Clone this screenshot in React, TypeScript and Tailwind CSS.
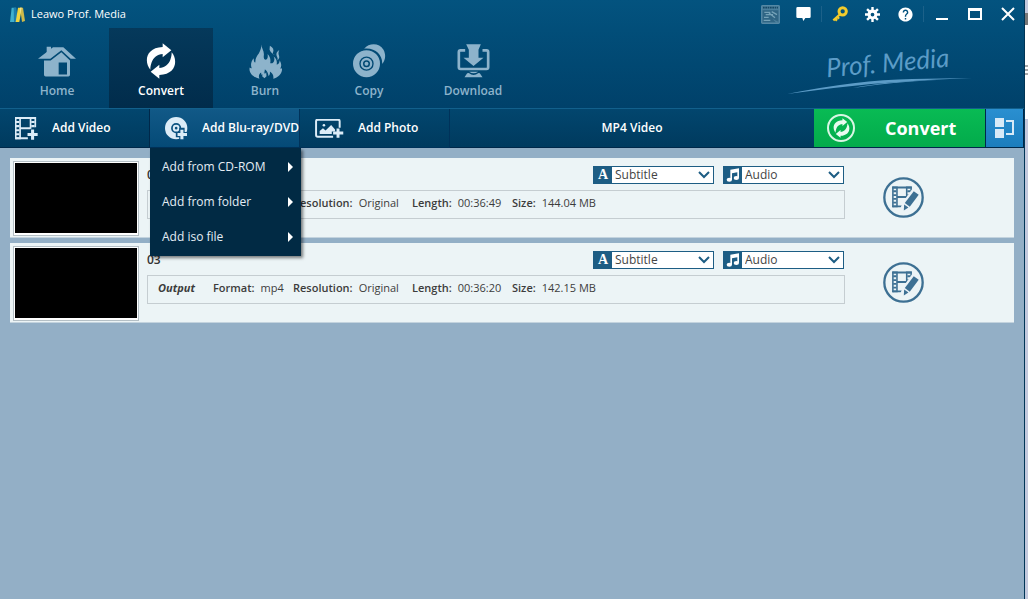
import type { ReactNode } from 'react';
import { MdHelp } from 'react-icons/md';

interface MediaFile {
  name: string;
  format: string;
  resolution: string;
  length: string;
  size: string;
}

const files: MediaFile[] = [
  { name: '02', format: 'mp4', resolution: 'Original', length: '00:36:49', size: '144.04 MB' },
  { name: '03', format: 'mp4', resolution: 'Original', length: '00:36:20', size: '142.15 MB' },
];

const menuItems = ['Add from CD-ROM', 'Add from folder', 'Add iso file'];

function LogoIcon() {
  return (
    <svg viewBox="0 0 45 45" className="w-[15px] h-[15px]" aria-hidden="true">
      <path d="M5 2h13L12 45H0z" fill="#3fb0cf" />
      <path d="M11 2h8l5 43H12z" fill="#1c7fae" />
      <path d="M24 2h12l-8 43H17z" fill="#efd440" />
      <path d="M30 2h9l6 40-9 3z" fill="#cdb94a" />
      <path d="M30 2h5l-4 20z" fill="#f7e997" />
    </svg>
  );
}

function HomeIcon() {
  return (
    <svg viewBox="0 0 114 92" className="w-[38px] h-[31px]" fill="currentColor" aria-hidden="true">
      <path d="M26 2h13v10L26 21z" />
      <path d="M0 38 45 3h31l38 35H98L70 12 37 38z" />
      <path
        fillRule="evenodd"
        d="M18 43h20l32-25 26 25v43q0 5-5 5H23q-5 0-5-5zM62 49v36h25V49z"
      />
    </svg>
  );
}

function ConvertArrows({ className }: { className: string }) {
  return (
    <svg viewBox="0 0 90 108" className={className} fill="currentColor" aria-hidden="true">
      <path d="M50 1 76 22 50 43V33C34 34 22 44 17 58 14 66 13 72 13 80-6 58-2 14 50 12z" />
      <path
        transform="rotate(180 45 54)"
        d="M50 1 76 22 50 43V33C34 34 22 44 17 58 14 66 13 72 13 80-6 58-2 14 50 12z"
      />
    </svg>
  );
}

function BurnIcon() {
  return (
    <svg viewBox="0 0 98 104" className="w-[33px] h-[35px]" fill="currentColor" aria-hidden="true">
      <path d="M37 0c-1 12 9 20 7 34-1 9 1 12 6 13 5-2 7-8 5-17 8 8 10 16 8 27 6 2 11-2 12-9 1-4 0-8-2-11 9 6 11 15 9 24 6-1 9-5 9-13 7 12 5 20 2 25 3 1 4 0 5-2 2 14-9 29-26 32 2-8-2-16-10-21 1 7-1 11-4 13-1-9-5-15-11-20 1 9-6 12-8 18-2-1-3-4-3-8-7 5-8 11-5 18C14 100-2 86 2 70c2 2 4 3 6 2-4-10-2-21 6-30 0 8 1 12 5 13-1-12 4-19 10-27 5-8 8-17 8-28z" />
      <path d="M62 5c10 5 13 12 9 21 0 4 2 6 5 6-7-5-14-9-15-16 0-4 1-7 1-11z" />
      <path d="M90 18c-7 5-10 10-8 17 2 6 5 8 2 13 6-4 7-8 5-14-2-5-2-9 1-16z" />
      <path d="M41 88l4-6 2 7 4-5 1 12-6 6-7-6z" />
    </svg>
  );
}

function CopyIcon() {
  return (
    <svg viewBox="0 0 98 102" className="w-[33px] h-[34px]" fill="none" aria-hidden="true">
      <path
        fill="currentColor"
        d="M33 14C48-4 78-4 91 17c8 15 6 32-4 43C89 34 67 10 33 14z"
      />
      <circle cx="40" cy="59" r="31" stroke="currentColor" strokeWidth="19" />
      <circle cx="40" cy="59" r="14" stroke="currentColor" strokeWidth="7" />
      <circle cx="40" cy="59" r="6" fill="currentColor" />
    </svg>
  );
}

function DownloadIcon() {
  return (
    <svg viewBox="0 0 98 102" className="w-[33px] h-[34px]" fill="none" aria-hidden="true">
      <path
        d="M24 19H10q-5 0-5 5v46q0 5 5 5h78q5 0 5-5V24q0-5-5-5H76"
        stroke="currentColor"
        strokeWidth="8"
      />
      <path fill="currentColor" d="M27 1h44l-7 16v24h15L49 66 19 41h16V17z" />
      <path fill="currentColor" d="M36 83q13 9 27 0zM30 88l5-1q14 12 29 0l4 1 8 12H22z" />
    </svg>
  );
}

// film frame shared by the "add" button and the edit button
function FilmFrame() {
  return (
    <>
      <path d="M2 0v66M15 0v66M46 0v35M60 0v30" strokeWidth="5" />
      <path d="M8 0v66M53 0v31" strokeWidth="10" strokeDasharray="6 6" />
      <path d="M0 3h62M15 33h31M0 63h38" strokeWidth="6" />
    </>
  );
}

function AddVideoIcon() {
  return (
    <svg viewBox="0 0 68 68" className="w-[23px] h-[23px]" fill="none" stroke="currentColor" aria-hidden="true">
      <FilmFrame />
      <path d="M52 37v30M37 52h30" strokeWidth="9" />
    </svg>
  );
}

function AddDiscIcon() {
  return (
    <svg viewBox="0 0 68 68" className="w-[23px] h-[23px]" fill="none" stroke="currentColor" aria-hidden="true">
      <circle cx="33" cy="33" r="24" strokeWidth="18" />
      <circle cx="33" cy="33" r="7" strokeWidth="6" />
      <path d="M50 32v38M32 52h38" stroke="#0b507f" strokeWidth="16" />
      <path d="M50 38v28M37 52h28" strokeWidth="9" />
    </svg>
  );
}

function AddPhotoIcon() {
  return (
    <svg viewBox="0 0 86 58" className="w-[29px] h-[19px]" fill="none" stroke="currentColor" aria-hidden="true">
      <path d="M54 54H7q-5 0-5-5V7q0-5 5-5h62q5 0 5 5v20" strokeWidth="6" />
      <path fill="currentColor" stroke="none" d="M13 46V37l10-9 8 7 17-17 12 14v6H50v8z" />
      <circle cx="26" cy="19" r="4" fill="currentColor" stroke="none" />
      <path d="M69 29v28M54 43h31" strokeWidth="9" />
    </svg>
  );
}

function EditIcon() {
  return (
    <svg viewBox="0 0 124 124" className="w-[41px] h-[41px]" fill="none" stroke="currentColor" aria-hidden="true">
      <g transform="translate(28 29) scale(0.95)">
        <FilmFrame />
      </g>
      <path d="M102 38 72 80l-9 20" stroke="#ecf3f7" strokeWidth="24" />
      <path fill="currentColor" stroke="none" d="m93 43 15 11-27 36-15-11z" />
      <path fill="currentColor" stroke="none" d="m64 83 13 9-14 9z" />
      <circle cx="62" cy="62" r="58" strokeWidth="7" />
    </svg>
  );
}

function KeyIcon() {
  return (
    <svg viewBox="0 0 48 48" className="w-4 h-4" fill="none" stroke="#f3cb2c" aria-hidden="true">
      <circle cx="32" cy="16" r="11" strokeWidth="9" />
      <path d="M25 24 4 43M9 38l6 6M16 32l5 6" strokeWidth="7" />
    </svg>
  );
}

function GearIcon() {
  return (
    <svg viewBox="0 0 44 44" className="w-[15px] h-[15px]" fill="none" stroke="currentColor" aria-hidden="true">
      <circle cx="22" cy="22" r="10" strokeWidth="9" />
      <path
        d="M22 0v9M22 35v9M0 22h9M35 22h9M6 6l7 7M31 31l7 7M38 6l-7 7M13 31l-7 7"
        strokeWidth="7"
      />
    </svg>
  );
}

function SnapshotIcon() {
  return (
    <svg viewBox="0 0 57 57" className="w-[19px] h-[19px]" fill="none" aria-hidden="true">
      <rect x="1" y="1" width="55" height="55" rx="4" fill="#4a7f9c" stroke="#6f9bb3" strokeWidth="2" />
      <path d="M6 8h45" stroke="#164865" strokeWidth="5" strokeDasharray="5 2" />
      <path d="M5 16h47v34l-17-8 9 10H5z" fill="#2f6584" />
      <path d="M10 22h18M14 29h22M9 37h14M24 24l18 14M32 20l16 9M8 46h20" stroke="#75a2b8" strokeWidth="4" />
    </svg>
  );
}

function TitleButton({ label, children }: { label: string; children: ReactNode }) {
  return (
    <button type="button" aria-label={label} className="w-[33px] h-7 flex items-center justify-center">
      {children}
    </button>
  );
}

function TitleBar() {
  return (
    <div className="flex items-center h-7 pl-[10px]">
      <LogoIcon />
      <h1 className="ml-[6px] text-[11px]">Leawo Prof. Media</h1>
      <div className="ml-auto flex items-center">
        <TitleButton label="Snapshot">
          <SnapshotIcon />
        </TitleButton>
        <TitleButton label="Feedback">
          <svg viewBox="0 0 45 42" className="w-[15px] h-[14px]" fill="currentColor" aria-hidden="true">
            <path d="M5 0h35q4 0 4 4v25q0 4-4 4H28l-6 9-3-9H5q-4 0-4-4V4q0-4 4-4z" />
          </svg>
        </TitleButton>
        <span className="w-px h-4 mx-px bg-[#1c6189]" />
        <TitleButton label="Register">
          <KeyIcon />
        </TitleButton>
        <TitleButton label="Settings">
          <GearIcon />
        </TitleButton>
        <TitleButton label="Help">
          <MdHelp className="w-[17px] h-[17px]" />
        </TitleButton>
        <span className="w-px h-4 mx-px bg-[#1c6189]" />
        <TitleButton label="Minimize">
          <svg viewBox="0 0 14 14" className="w-[14px] h-[14px]" aria-hidden="true">
            <path d="M1 12h12" stroke="currentColor" strokeWidth="2" />
          </svg>
        </TitleButton>
        <TitleButton label="Maximize">
          <svg viewBox="0 0 14 12" className="w-[14px] h-3" fill="none" aria-hidden="true">
            <path d="M1 1v10h12V1" stroke="currentColor" strokeWidth="2" />
            <path d="M0 1.5h14" stroke="currentColor" strokeWidth="3" />
          </svg>
        </TitleButton>
        <TitleButton label="Close">
          <svg viewBox="0 0 14 14" className="w-[14px] h-[14px]" aria-hidden="true">
            <path d="m1 1 12 12M13 1 1 13" stroke="currentColor" strokeWidth="2" />
          </svg>
        </TitleButton>
      </div>
    </div>
  );
}

function NavButton({ label, active, children }: { label: string; active?: boolean; children: ReactNode }) {
  return (
    <button
      type="button"
      className={
        'w-[104px] flex flex-col items-center pt-[14px] text-[12px] leading-4 font-semibold ' +
        (active ? 'bg-linear-to-b from-[#05395b] to-[#012c4b] text-white' : 'text-[#8db3cb]')
      }
    >
      <span className="h-[38px] flex items-center">{children}</span>
      <span className="mt-[3px]">{label}</span>
    </button>
  );
}

function Brand() {
  return (
    <div className="ml-auto mr-[51px] mt-[16px] flex flex-col items-center text-[#5c9cc7]">
      <span className="ml-4 -rotate-5 font-['Lato'] italic text-[26px] leading-9">Prof. Media</span>
      <svg viewBox="0 0 186 18" className="w-[186px] h-[18px] -mt-[3px]" fill="currentColor" aria-hidden="true">
        <path d="M0 17Q70 3 125 2l60-1Q90 4 0 17z" />
        <path d="M66 11Q100 4 150 3q-45 2-84 8z" />
      </svg>
    </div>
  );
}

function AddMenu() {
  return (
    <ul className="absolute left-0 top-full z-10 w-[151px] h-[108px] pt-px bg-[#012a44] shadow-[2px_2px_3px_rgba(0,0,0,0.5)]">
      {menuItems.map((item) => (
        <li key={item}>
          <button
            type="button"
            className="w-full h-[35px] pl-3 pr-2 flex items-center justify-between text-[12px] font-normal text-[#e4edf4]"
          >
            {item}
            <svg viewBox="0 0 5 10" className="w-[5px] h-[10px]" fill="#fff" aria-hidden="true">
              <path d="M0 0l5 5-5 5z" />
            </svg>
          </button>
        </li>
      ))}
    </ul>
  );
}

function Toolbar() {
  return (
    <div className="flex h-10 border-t border-[#12608c] bg-linear-to-b from-[#02466e] to-[#003a5e] text-[12px] font-semibold">
      <button
        type="button"
        className="w-[150px] pl-[15px] flex items-center border-b border-r border-[#00284a] whitespace-nowrap"
      >
        <span className="w-[37px] shrink-0 text-[#dcecf7]">
          <AddVideoIcon />
        </span>
        Add Video
      </button>
      <div className="relative w-[150px]">
        <button
          type="button"
          aria-haspopup="menu"
          aria-expanded="true"
          className="w-full h-full pl-[15px] flex items-center bg-linear-to-b from-[#115987] to-[#054a77] border-b border-r border-[#00325a] whitespace-nowrap"
        >
          <span className="w-[37px] shrink-0 text-[#dcecf7]">
            <AddDiscIcon />
          </span>
          Add Blu-ray/DVD
        </button>
        <AddMenu />
      </div>
      <button
        type="button"
        className="w-[150px] pl-[15px] flex items-center border-b border-r border-[#00325a] whitespace-nowrap"
      >
        <span className="w-[43px] shrink-0 text-[#dcecf7]">
          <AddPhotoIcon />
        </span>
        Add Photo
      </button>
      <button type="button" className="flex-1 border-b border-[#00284a]">
        MP4 Video
      </button>
      <button
        type="button"
        className="w-[171px] pl-[13px] flex items-center border-b border-[#00284a] bg-linear-to-b from-[#09bb54] to-[#03ab4b] text-[18px] font-bold"
      >
        <span className="w-7 h-7 rounded-full border-2 border-[#d9f6e4] flex items-center justify-center text-[#e9fbf0]">
          <ConvertArrows className="w-[17px] h-5" />
        </span>
        <span className="ml-[30px]">Convert</span>
      </button>
      <button
        type="button"
        aria-label="Toggle panel"
        className="w-[39px] flex items-center justify-center border-b border-l border-r border-[#00284a] bg-linear-to-b from-[#2a8fd0] to-[#1b7dbd]"
      >
        <svg viewBox="0 0 20 20" className="w-5 h-5" fill="#d8eaf7" aria-hidden="true">
          <path d="M0 0h9v9H0zM0 11h9v9H0z" />
          <path d="M11 3h7v13h-7" fill="none" stroke="#d8eaf7" strokeWidth="2" />
        </svg>
      </button>
    </div>
  );
}

function TrackSelect({ label, icon }: { label: string; icon: ReactNode }) {
  return (
    <label className="relative w-[121px] h-[18px] flex border border-[#1d5d84] bg-white">
      <span className="w-[18px] flex items-center justify-center bg-[#1d5d84] text-white">{icon}</span>
      <select
        aria-label={label}
        className="flex-1 appearance-none bg-transparent pl-[3px] text-[12px] leading-4 text-[#444]"
      >
        <option>{label}</option>
      </select>
      <svg
        viewBox="0 0 12 8"
        className="absolute right-[3px] top-1 w-3 h-2 pointer-events-none"
        fill="none"
        aria-hidden="true"
      >
        <path d="m1 1 5 5 5-5" stroke="#1d5d84" strokeWidth="2" />
      </svg>
    </label>
  );
}

function Field({ label, value }: { label: string; value: string }) {
  return (
    <div className="flex gap-[6px] whitespace-nowrap">
      <dt className="font-semibold">{label}:</dt>
      <dd>{value}</dd>
    </div>
  );
}

function FileRow({ file }: { file: MediaFile }) {
  return (
    <li className="flex h-20 pl-[3px] bg-[#ecf4f6] border-b border-[#c3d3de]">
      <div className="mt-[3px] w-[126px] h-[75px] shrink-0 border border-[#b4bfc5] bg-white px-px pt-px pb-[2px]">
        <div className="w-full h-full bg-black" />
      </div>
      <div className="ml-2 flex-1 pt-2">
        <div className="flex gap-[9px] pr-px">
          <h2 className="flex-1 text-[12px] leading-[18px] font-semibold text-[#333]">{file.name}</h2>
          <TrackSelect
            label="Subtitle"
            icon={<span className="font-['Liberation_Serif'] text-[14px] leading-4 font-bold">A</span>}
          />
          <TrackSelect
            label="Audio"
            icon={
              <svg viewBox="0 0 42 42" className="w-[14px] h-[14px]" fill="currentColor" aria-hidden="true">
                <path d="M13 5 39 1v28h-5V13L18 16v19h-5z" />
                <ellipse cx="10" cy="35" rx="8" ry="6" />
                <ellipse cx="31" cy="30" rx="8" ry="6" />
              </svg>
            }
          />
        </div>
        <dl className="mt-[6px] h-[29px] pl-[10px] pb-[3px] grid grid-cols-[55px_80px_119px_100px_auto] items-center border border-[#c5cdd1] text-[11px] leading-4 text-[#3c3c3c]">
          <dt className="font-bold italic">Output</dt>
          <Field label="Format" value={file.format} />
          <Field label="Resolution" value={file.resolution} />
          <Field label="Length" value={file.length} />
          <Field label="Size" value={file.size} />
        </dl>
      </div>
      <button type="button" aria-label={`Edit ${file.name}`} className="ml-[38px] mr-[90px] text-[#3d7093]">
        <EditIcon />
      </button>
    </li>
  );
}

export default function App() {
  return (
    <div className="flex min-h-screen bg-[#c3c9dd] font-['Open_Sans','Noto_Sans',sans-serif] text-white">
      <div className="flex-1 flex flex-col border-r border-[#003556] bg-[#93afc6]">
        <header className="bg-linear-to-b from-[#03537f] to-[#00416a]">
          <TitleBar />
          <div className="flex">
            <nav className="flex h-20 pl-[5px]">
              <NavButton label="Home">
                <HomeIcon />
              </NavButton>
              <NavButton label="Convert" active>
                <ConvertArrows className="w-[30px] h-9" />
              </NavButton>
              <NavButton label="Burn">
                <BurnIcon />
              </NavButton>
              <NavButton label="Copy">
                <CopyIcon />
              </NavButton>
              <NavButton label="Download">
                <DownloadIcon />
              </NavButton>
            </nav>
            <Brand />
          </div>
        </header>
        <Toolbar />
        <ul className="px-[10px] pt-[10px] flex flex-col gap-[5px]">
          {files.map((file) => (
            <FileRow key={file.name} file={file} />
          ))}
        </ul>
      </div>
      {/* sliver of the window behind */}
      <div className="w-[3px] flex flex-col">
        <div className="h-[13px] bg-[#c3c9dd]" />
        <div className="h-3 bg-[#777]" />
        <div className="h-[94px] bg-white pt-10">
          <svg viewBox="0 0 3 10" className="w-[3px] h-[10px]" aria-hidden="true">
            <path d="M0 1h3M0 5h3M0 9h3" stroke="#555" strokeWidth="1" />
          </svg>
        </div>
      </div>
    </div>
  );
}
